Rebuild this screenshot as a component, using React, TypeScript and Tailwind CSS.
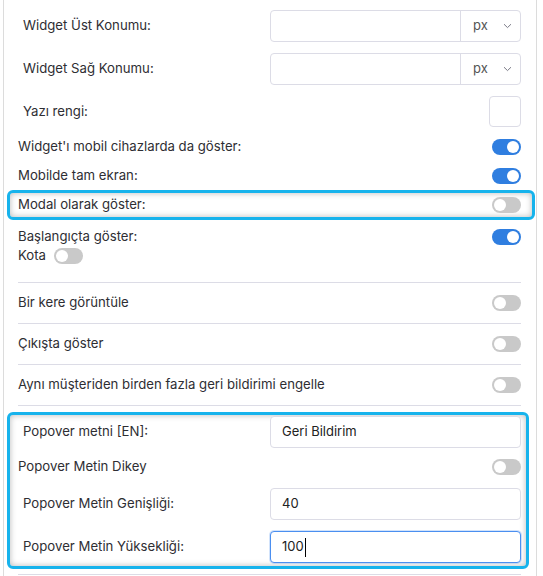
import React from 'react';

function Toggle({ on }: { on?: boolean }) {
  return (
    <div
      className={`relative h-[16px] w-[29px] shrink-0 rounded-full ${on ? 'bg-[#2f7ee0]' : 'bg-[#c9c9c9]'}`}
    >
      <div
        className={`absolute top-[2px] h-[12px] w-[12px] rounded-full bg-white ${on ? 'left-[15px]' : 'left-[2px]'}`}
      />
    </div>
  );
}

function Chevron() {
  return (
    <svg width="9" height="6" viewBox="0 0 9 6" fill="none">
      <path d="M1 1.2 L4.5 4.6 L8 1.2" stroke="#7a7a86" strokeWidth="1" />
    </svg>
  );
}

function UnitInput() {
  return (
    <div className="flex h-[32px] w-[251px] rounded-[4px] border border-[#dcdce6] bg-white">
      <div className="flex-1" />
      <div className="flex w-[60px] items-center gap-[15px] border-l border-[#dcdce6] pl-[12px]">
        <span className="text-[13px] text-[#555]">px</span>
        <Chevron />
      </div>
    </div>
  );
}

function TextInput({ value, focused }: { value: string; focused?: boolean }) {
  return (
    <div
      className={`flex h-[32px] w-[251px] items-center rounded-[4px] border bg-white pl-[11px] text-[13px] text-[#222] ${focused ? 'border-[#4b8ff0] shadow-[0_0_0_1px_rgba(75,143,240,0.25)]' : 'border-[#dcdce6]'}`}
    >
      {value}
      {focused && <span className="ml-[1px] inline-block h-[19px] w-[1px] bg-black" />}
    </div>
  );
}

function ToggleRow({ label, on, h = 'h-[29px]' }: { label: string; on?: boolean; h?: string }) {
  return (
    <div className={`flex items-center justify-between ${h}`}>
      <span>{label}</span>
      <Toggle on={on} />
    </div>
  );
}

export default function App() {
  return (
    <div className="min-h-[576px] bg-white pl-[3px] pr-[6px] font-['Inter',sans-serif] text-[13.2px] text-[#2e2e33]">
      <div className="min-h-[576px] border-x border-[#dcdcdc] pl-[14px] pr-[15px] pt-[10px]">
        {/* position inputs */}
        <div className="flex h-[32px] items-center justify-between pl-[5px]">
          <span>Widget Üst Konumu:</span>
          <UnitInput />
        </div>
        <div className="mt-[11px] flex h-[32px] items-center justify-between pl-[5px]">
          <span>Widget Sağ Konumu:</span>
          <UnitInput />
        </div>
        <div className="mt-[11px] flex h-[31px] items-center justify-between pl-[5px]">
          <span>Yazı rengi:</span>
          <div className="h-[31px] w-[32px] rounded-[4px] border border-[#dcdce6] bg-white" />
        </div>

        {/* toggles */}
        <div className="mt-[5px]">
          <ToggleRow label="Widget'ı mobil cihazlarda da göster:" on />
          <ToggleRow label="Mobilde tam ekran:" on />
        </div>
        <div className="-ml-[11px] -mr-[14px] flex h-[30px] items-center justify-between rounded-[6px] border-[3px] border-[#17b3ec] pl-[8px] pr-[11px] shadow-[inset_0_0_6px_rgba(0,0,0,0.28)]">
          <span>Modal olarak göster:</span>
          <Toggle />
        </div>
        <div className="pt-[7px]">
          <div className="flex h-[20px] items-center justify-between">
            <span>Başlangıçta göster:</span>
            <Toggle on />
          </div>
          <div className="flex h-[18px] items-center gap-[8px]">
            <span>Kota</span>
            <Toggle />
          </div>
        </div>

        <div className="mt-[17px] border-t border-[#dcdce6]">
          <ToggleRow label="Bir kere görüntüle" h="h-[40px]" />
        </div>
        <div className="border-t border-[#dcdce6]">
          <ToggleRow label="Çıkışta göster" h="h-[40px]" />
        </div>
        <div className="border-t border-[#dcdce6]">
          <ToggleRow label="Aynı müşteriden birden fazla geri bildirimi engelle" h="h-[40px]" />
        </div>
        <div className="border-t border-[#dcdce6] pt-[6px]">
          <div className="-ml-[11px] -mr-[8px] rounded-[6px] border-[3px] border-[#17b3ec] pb-[3px] pl-[8px] pr-[5px] pt-[1px] shadow-[inset_0_0_6px_rgba(0,0,0,0.28)]">
            <div className="flex h-[31px] items-center justify-between pl-[5px]">
              <span>Popover metni [EN]:</span>
              <div className="h-[31px]">
                <TextInput value="Geri Bildirim" />
              </div>
            </div>
            <ToggleRow label="Popover Metin Dikey" h="h-[40px]" />
            <div className="mt-[1px] flex h-[32px] items-center justify-between pl-[5px]">
              <span>Popover Metin Genişliği:</span>
              <TextInput value="40" />
            </div>
            <div className="mt-[11px] flex h-[32px] items-center justify-between pl-[5px]">
              <span>Popover Metin Yüksekliği:</span>
              <TextInput value="100" focused />
            </div>
          </div>
          <div className="mt-[5px] border-t border-[#dcdce6]" />
        </div>
      </div>
    </div>
  );
}
